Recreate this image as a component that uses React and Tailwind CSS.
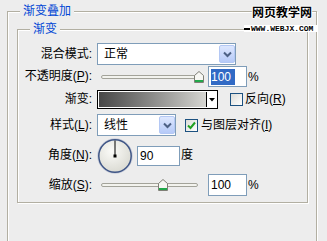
import React from "react";

function Select({ w, text }) {
  return (
    <div className={`flex h-[22px] ${w} items-stretch border border-[#7F9DB9] bg-white`}>
      <span className="flex-1 pl-[6px] leading-[20px]">{text}</span>
      <span className="my-[1px] mr-[0px] flex w-[16px] items-center justify-center rounded-[2px] border border-[#B4C8F4] bg-linear-to-b from-[#DDE7FE] to-[#B6CAF8]">
        <svg width="9" height="7" viewBox="0 0 9 7">
          <path d="M1 1.5 L4.5 5 L8 1.5" fill="none" stroke="#4D6185" strokeWidth="2" />
        </svg>
      </span>
    </div>
  );
}

function Thumb() {
  return (
    <svg width="10" height="12" viewBox="0 0 10 12">
      <path d="M0.5 4.5 L5 0.5 L9.5 4.5 V11.5 H0.5 Z" fill="#F7F7F3" stroke="#7F7F76" />
      <rect x="1" y="9" width="8" height="2" fill="#22A84A" />
    </svg>
  );
}

function Slider({ thumbClass }) {
  return (
    <div className="relative h-full w-[108px]">
      <div className="absolute left-[4px] top-1/2 h-[4px] w-[97px] -translate-y-1/2 rounded-full border border-[#A3A39A] bg-[#F3F3EE]" />
      <div className={`absolute top-1/2 flex -translate-y-1/2 ${thumbClass}`}>
        <Thumb />
      </div>
    </div>
  );
}

function Label({ children }) {
  return <div className="w-[74px] shrink-0 text-right leading-[15px]">{children}</div>;
}

function Checkbox({ checked }) {
  return (
    <span className="flex h-[13px] w-[13px] shrink-0 items-center justify-center border border-[#1C5180] bg-linear-to-br from-[#DCDCD7] to-white">
      {checked && (
        <svg width="11" height="11" viewBox="0 0 11 11">
          <path d="M2 5.5 L4.5 8 L9 2.5" fill="none" stroke="#21A121" strokeWidth="2" />
        </svg>
      )}
    </span>
  );
}

export default function App() {
  return (
    <div className="relative h-[241px] w-[327px] overflow-hidden bg-[#EDEDED] text-[12px] text-black [font-family:'Liberation_Sans','Noto_Sans_CJK_SC',sans-serif]">
      <fieldset className="ml-[7px] mt-[4px] h-[260px] w-[310px] border border-[#B2AFA2] shadow-[inset_1px_1px_0_#fff,1px_1px_0_#fff]">
        <legend className="ml-[12px] bg-[#EDEDED] px-[3px] leading-[15px] text-[#0046D5]">渐变叠加</legend>
        <fieldset className="ml-[9px] mt-[3px] w-[291px] border border-[#B2AFA2] shadow-[inset_1px_1px_0_#fff,1px_1px_0_#fff]">
          <legend className="ml-[12px] bg-[#EDEDED] px-[3px] leading-[15px] text-[#0046D5]">渐变</legend>
          <div className="flex flex-col pb-[6px] pt-[6px]">
            {/* Row 1 */}
            <div className="flex h-[22px] items-center">
              <Label>混合模式:</Label>
              <div className="ml-[5px]">
                <Select w="w-[139px]" text="正常" />
              </div>
            </div>
            {/* Row 2 */}
            <div className="mt-[1px] flex h-[21px] items-center">
              <Label>
                不透明度(<u>P</u>):
              </Label>
              <div className="ml-[5px] h-full">
                <Slider thumbClass="left-[97px]" />
              </div>
              <div className="ml-[3px] flex h-[21px] w-[39px] items-center border border-[#7F9DB9] bg-white pl-[2px]">
                <span className="bg-[#316AC5] pr-[4px] leading-[16px] text-white">100</span>
              </div>
              <span className="ml-[1px]">%</span>
            </div>
            {/* Row 3 */}
            <div className="mt-[3px] flex h-[19px] items-center">
              <Label>渐变:</Label>
              <div className="ml-[5px] flex h-[19px] w-[121px] border border-black bg-white p-[1px]">
                <div className="flex-1 bg-linear-to-r from-[#484848] to-[#D6D6D2]" />
                <div className="flex w-[10px] items-center justify-center border-l border-black bg-white">
                  <svg width="6" height="4" viewBox="0 0 6 4">
                    <path d="M0 0 H6 L3 3.5 Z" fill="#000" />
                  </svg>
                </div>
              </div>
              <div className="ml-[12px] flex items-center">
                <Checkbox />
                <span className="ml-[2px] leading-[15px]">
                  反向(<u>R</u>)
                </span>
              </div>
            </div>
            {/* Row 4 */}
            <div className="mt-[5px] flex h-[22px] items-center">
              <Label>
                样式(<u>L</u>):
              </Label>
              <div className="ml-[5px]">
                <Select w="w-[79px]" text="线性" />
              </div>
              <div className="ml-[9px] flex items-center">
                <Checkbox checked />
                <span className="ml-[3px] leading-[15px]">
                  与图层对齐(<u>I</u>)
                </span>
              </div>
            </div>
            {/* Row 5 */}
            <div className="mt-[1px] flex h-[37px] items-center">
              <Label>
                角度(<u>N</u>):
              </Label>
              <svg className="ml-[5px]" width="36" height="36" viewBox="0 0 36 36">
                <defs>
                  <radialGradient id="dial" cx="40%" cy="35%" r="70%">
                    <stop offset="0" stopColor="#FBFBF8" />
                    <stop offset="1" stopColor="#D9D9D1" />
                  </radialGradient>
                </defs>
                <circle cx="18" cy="18" r="17.3" fill="none" stroke="#C9CEDB" strokeWidth="1" />
                <circle cx="18" cy="18" r="16.2" fill="url(#dial)" stroke="#3E5586" strokeWidth="1.5" />
                <line x1="18" y1="18" x2="18" y2="2.5" stroke="#000" strokeWidth="1" />
                <rect x="16.5" y="16.5" width="3" height="3" fill="#000" />
              </svg>
              <div className="ml-[4px] flex h-[20px] w-[43px] items-center border border-[#7F9DB9] bg-white pl-[2px] leading-[16px]">
                90
              </div>
              <span className="ml-[1px] leading-[15px]">度</span>
            </div>
            {/* Row 6 */}
            <div className="flex h-[22px] items-center">
              <Label>
                缩放(<u>S</u>):
              </Label>
              <div className="ml-[5px] h-full">
                <Slider thumbClass="left-[61px]" />
              </div>
              <div className="ml-[3px] flex h-[22px] w-[39px] items-center border border-[#7F9DB9] bg-white pl-[2px] leading-[16px]">
                100
              </div>
              <span className="ml-[1px]">%</span>
            </div>
          </div>
        </fieldset>
      </fieldset>

      {/* watermark */}
      <div className="absolute left-[244px] top-[6px] flex w-[73px] flex-col items-end">
        <span className="mr-[5px] text-[12px] font-bold leading-[14px] text-black [text-shadow:1px_0_#fff,-1px_0_#fff,0_1px_#fff,0_-1px_#fff]">
          网页教学网
        </span>
        <div className="mt-[5px] flex h-[7px] w-full items-center bg-white">
          <span className="h-[2px] w-[6px] bg-black" />
          <span className="ml-[1px] text-[8px] font-bold leading-[7px] tracking-[0px] [font-family:'Liberation_Mono',monospace]">
            WWW.WEBJX.COM
          </span>
        </div>
      </div>
    </div>
  );
}
